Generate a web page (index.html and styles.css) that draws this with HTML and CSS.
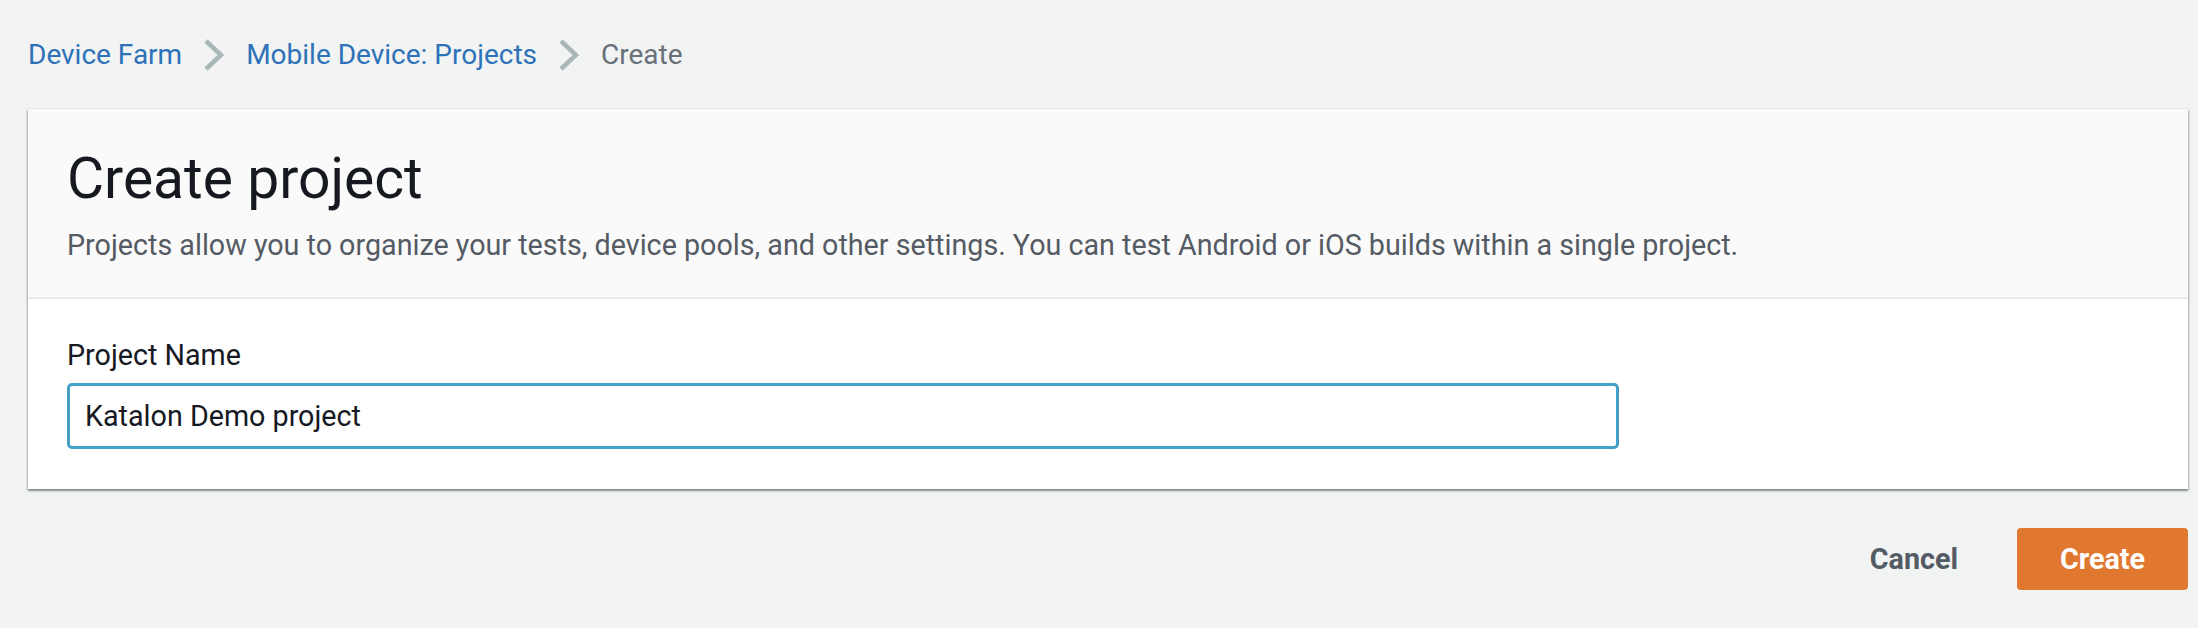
FILE: index.html
```html
<!DOCTYPE html>
<html lang="en">
<head>
<meta charset="utf-8">
<title>Create project</title>
<link rel="stylesheet" href="styles.css">
</head>
<body>
<div class="page">
  <nav class="breadcrumb">
    <a class="crumb-link" href="#">Device Farm</a>
    <svg class="chev" width="20" height="32" viewBox="0 0 20 32"><polyline points="2,2 17,16 2,30" fill="none" stroke="#aab7b8" stroke-width="4.5"/></svg>
    <a class="crumb-link" href="#">Mobile Device: Projects</a>
    <svg class="chev" width="20" height="32" viewBox="0 0 20 32"><polyline points="2,2 17,16 2,30" fill="none" stroke="#aab7b8" stroke-width="4.5"/></svg>
    <span class="crumb-current">Create</span>
  </nav>

  <section class="card">
    <header class="card-header">
      <h1 class="card-title">Create project</h1>
      <p class="card-desc">Projects allow you to organize your tests, device pools, and other settings. You can test Android or iOS builds within a single project.</p>
    </header>
    <div class="card-body">
      <label class="field-label" for="pname">Project Name</label>
      <input class="field-input" id="pname" type="text" value="Katalon Demo project">
    </div>
  </section>

  <div class="actions">
    <button class="btn btn-cancel" type="button">Cancel</button>
    <button class="btn btn-primary" type="button">Create</button>
  </div>
</div>
</body>
</html>
```
FILE: styles.css
```css
html, body {
  margin: 0;
  background: #f2f3f3;
}
body {
  font-family: Roboto, "Liberation Sans", sans-serif;
  font-size: 28.7px;
  color: #16191f;
}
.page {
  padding: 0 10px 0 28px;
}
.breadcrumb {
  height: 109px;
  display: flex;
  align-items: center;
  gap: 22px;
  font-size: 28px;
}
.crumb-link {
  color: #2d72b8;
  text-decoration: none;
}
.crumb-current {
  color: #687078;
}
.chev {
  display: block;
}
.card {
  background: #ffffff;
  box-shadow: 0 2px 2px 0 rgba(0, 28, 36, 0.35), 1px 1px 2px 0 rgba(0, 28, 36, 0.15), -1px 1px 2px 0 rgba(0, 28, 36, 0.15), 0 0 0 1px rgba(0, 28, 36, 0.04);
}
.card-header {
  background: #fafafa;
  border-bottom: 2px solid #eaeded;
  padding: 35px 39px 32px;
}
.card-title {
  margin: 0;
  font-size: 57px;
  line-height: 70px;
  font-weight: 400;
  color: #16191f;
}
.card-desc {
  margin: 11px 0 0;
  line-height: 40px;
  color: #545b64;
}
.card-body {
  padding: 36px 39px 40px;
}
.field-label {
  display: block;
  line-height: 40px;
  color: #16191f;
}
.field-input {
  display: block;
  box-sizing: border-box;
  width: 100%;
  max-width: 1552px;
  height: 66px;
  margin-top: 8px;
  padding: 0 15px;
  border: 3px solid #44a1c8;
  border-radius: 5px;
  outline: none;
  font-family: inherit;
  font-size: 28.7px;
  color: #16191f;
  background: #fff;
}
.actions {
  display: flex;
  justify-content: flex-end;
  align-items: center;
  gap: 19px;
  margin-top: 39px;
}
.btn {
  height: 62px;
  border: none;
  font-family: inherit;
  font-size: 28.7px;
  font-weight: 700;
  cursor: pointer;
}
.btn-cancel {
  background: transparent;
  color: #545b64;
  padding: 0 40px;
}
.btn-primary {
  width: 171px;
  background: #e1782f;
  color: #ffffff;
  border-radius: 4px;
}
```
